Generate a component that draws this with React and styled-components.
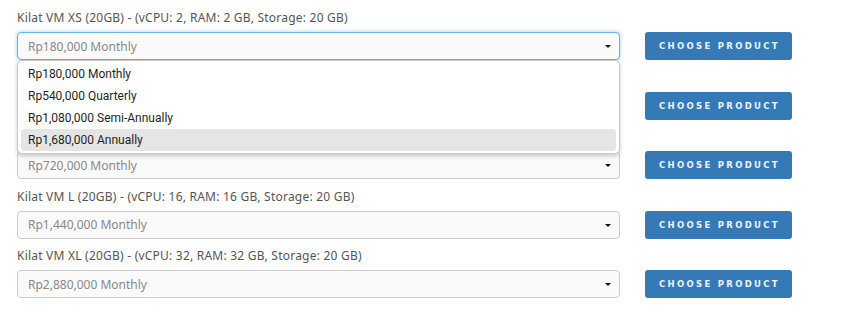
import React from "react";
import styled, { createGlobalStyle } from "styled-components";

const Global = createGlobalStyle`
  html, body { margin: 0; padding: 0; background: #ffffff; }
  body { font-family: "Open Sans", "Liberation Sans", sans-serif; }
`;

const Page = styled.div`
  width: 845px;
  height: 330px;
  padding: 8px 0 0 17px;
  box-sizing: border-box;
  overflow: hidden;
`;

const Row = styled.div`
  position: relative;
  z-index: ${(p) => (p.$top ? 2 : 1)};
  display: flex;
  align-items: flex-end;
  gap: 25px;
  height: 59.5px;
  box-sizing: border-box;
  padding-bottom: 7.5px;
`;

const Field = styled.div`
  position: relative;
  width: 603px;
  display: flex;
  flex-direction: column;
`;

const Label = styled.div`
  font-family: "Noto Sans", "Open Sans", sans-serif;
  font-size: 12px;
  letter-spacing: 0.22px;
  line-height: 20px;
  height: 20px;
  color: #555;
  margin-bottom: 4px;
  white-space: nowrap;
`;

const Select = styled.div`
  position: relative;
  height: 28px;
  box-sizing: border-box;
  border: 1px solid ${(p) => (p.$focus ? "#66afe9" : "#cccccc")};
  box-shadow: ${(p) =>
    p.$focus ? "0 0 4px rgba(102,175,233,0.6)" : "none"};
  border-radius: 4px;
  background: #fafafa;
  display: flex;
  align-items: center;
  padding-left: 10px;
  font-family: "Noto Sans", "Open Sans", sans-serif;
  font-size: 12px;
  color: #888;
`;

const Arrow = styled.span`
  position: absolute;
  right: 8px;
  top: 12px;
  width: 0;
  height: 0;
  border-left: 3px solid transparent;
  border-right: 3px solid transparent;
  border-top: 3px solid #111;
`;

const Menu = styled.div`
  position: absolute;
  left: 0;
  right: 0;
  top: 52px;
  z-index: 5;
  background: #fff;
  border: 1px solid #c8c8c8;
  border-radius: 5px;
  box-shadow: 0 2px 4px rgba(0, 0, 0, 0.2);
  padding: 2px 3px 2px 3px;
  box-sizing: border-box;
`;

const Option = styled.div`
  height: 22px;
  display: flex;
  align-items: center;
  padding-left: 7px;
  border-radius: 4px;
  font-family: Roboto, "Open Sans", sans-serif;
  font-size: 12px;
  color: #1f1f1f;
  background: ${(p) => (p.$active ? "#e5e5e5" : "transparent")};
`;

const Button = styled.button`
  width: 147px;
  height: 28px;
  border: none;
  border-radius: 3px;
  background: #357ab7;
  color: #eef3f9;
  font-family: "DejaVu Sans", sans-serif;
  font-weight: bold;
  font-size: 8.5px;
  letter-spacing: 2.3px;
  padding: 0 0 0 2px;
  cursor: pointer;
`;

const rows = [
  { label: "Kilat VM XS (20GB) - (vCPU: 2, RAM: 2 GB, Storage: 20 GB)", value: "Rp180,000 Monthly", open: true },
  { label: "", value: "" },
  { label: "", value: "Rp720,000 Monthly" },
  { label: "Kilat VM L (20GB) - (vCPU: 16, RAM: 16 GB, Storage: 20 GB)", value: "Rp1,440,000 Monthly" },
  { label: "Kilat VM XL (20GB) - (vCPU: 32, RAM: 32 GB, Storage: 20 GB)", value: "Rp2,880,000 Monthly" },
];

const options = [
  "Rp180,000 Monthly",
  "Rp540,000 Quarterly",
  "Rp1,080,000 Semi-Annually",
  "Rp1,680,000 Annually",
];

export default function App() {
  return (
    <>
      <Global />
      <Page>
        {rows.map((r, i) => (
          <Row key={i} $top={r.open}>
            <Field>
              <Label>{r.label}</Label>
              <Select $focus={r.open}>
                {r.value}
                <Arrow />
              </Select>
              {r.open && (
                <Menu>
                  {options.map((o, j) => (
                    <Option key={j} $active={j === 3}>
                      {o}
                    </Option>
                  ))}
                </Menu>
              )}
            </Field>
            <Button>CHOOSE PRODUCT</Button>
          </Row>
        ))}
      </Page>
    </>
  );
}
